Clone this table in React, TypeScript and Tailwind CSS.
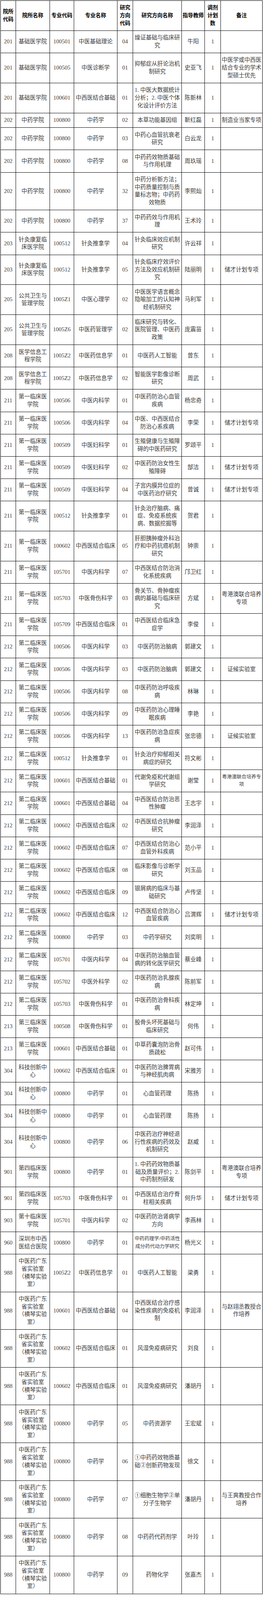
// 调剂名额表：9 列。浏览器窗口实际只有 4096px 高，行高按 4096/6019 压缩，
// 让整张表都落在画面里（原稿每行 29px、每格上下共 26px）
const headers = [
  "院所|代码",
  "院所名称",
  "专业代码",
  "专业名称",
  "研究|方向|代码",
  "研究方向名称",
  "指导教师",
  "调剂|计划|数",
  "备注",
];

const A = "第一临床医|学院";
const B = "第二临床医|学院";
const C = "第三临床医|学院";
const K = "科技创新中|心";
const L = "中医药广东|省实验室|（横琴实验|室）";

// "|" 为换行，"~" 开头为小号字
const rows: string[][] = [
  ["201", "基础医学院", "100501", "中医基础理论", "04", "燥证基础与临床研|究", "牛阳", "1", ""],
  ["201", "基础医学院", "100505", "中医诊断学", "01", "抑郁症从肝论治机|制研究", "史亚飞", "1", "中医学或中西医|结合专业的学术|型硕士优先"],
  ["201", "基础医学院", "100601", "中西医结合基础", "01", "1. 中医大数据统计|分析；2. 中医个体|化设计评价方法", "陈新林", "1", ""],
  ["202", "中药学院", "100800", "中药学", "02", "本草功能基因组", "靳红磊", "1", "制造业当家专项"],
  ["202", "中药学院", "100800", "中药学", "03", "中药心血管抗衰老|研究", "白云龙", "1", ""],
  ["202", "中药学院", "100800", "中药学", "08", "中药药效物质基础|与作用机理", "周玖瑶", "1", ""],
  ["202", "中药学院", "100800", "中药学", "32", "中药分析新方法；|中药质量控制与质|量标志物；中药药|效物质", "李熙灿", "1", ""],
  ["202", "中药学院", "100800", "中药学", "37", "中药药效与作用机|理", "王术玲", "1", ""],
  ["203", "针灸康复临|床医学院", "100512", "针灸推拿学", "04", "针灸临床效应机制|研究", "许云祥", "1", ""],
  ["203", "针灸康复临|床医学院", "100512", "针灸推拿学", "05", "针灸临床疗效评价|方法及效应机制研|究", "陆丽明", "1", "储才计划专项"],
  ["205", "公共卫生与|管理学院", "1005Z1", "中医心理学", "02", "中医医学语言概念|隐喻加工的认知神|经机制研究", "马利军", "1", ""],
  ["205", "公共卫生与|管理学院", "1005Z6", "中医药管理学", "02", "临床研究与转化、|医院管理、中医药|政策", "庞震苗", "1", ""],
  ["208", "医学信息工|程学院", "1005Z2", "中医药信息学", "01", "中医药人工智能", "曾东", "1", ""],
  ["208", "医学信息工|程学院", "1005Z2", "中医药信息学", "02", "智能医学影像诊断|研究", "周武", "1", ""],
  ["211", A, "100506", "中医内科学", "01", "中医药防治心血管|疾病", "杨忠奇", "1", ""],
  ["211", A, "100506", "中医内科学", "04", "中医、中西医结合|防治心系疾病", "李荣", "1", "储才计划专项"],
  ["211", A, "100509", "中医妇科学", "01", "生殖健康与生殖障|碍的中医药研究", "罗颂平", "1", ""],
  ["211", A, "100509", "中医妇科学", "02", "中医药防治女性生|殖障碍", "郜洁", "1", "储才计划专项"],
  ["211", A, "100509", "中医妇科学", "04", "子宫内膜异位症的|中医药治疗研究", "曾诚", "1", "储才计划专项"],
  ["211", A, "100512", "针灸推拿学", "01", "针灸治疗脑病、痛|症、免疫系统疾|病、数据挖掘等", "贺君", "1", ""],
  ["211", A, "100602", "中西医结合临床", "05", "肝胆胰肿瘤外科治|疗和中药抗癌机制|研究", "钟崇", "1", ""],
  ["211", A, "105701", "中医内科学", "07", "中西医结合防治消|化系统疾病", "邝卫红", "1", ""],
  ["211", A, "105703", "中医骨伤科学", "03", "骨关节、骨肿瘤疾|病的基础与临床研|究", "方斌", "1", "粤港澳联合培养|专项"],
  ["211", A, "105709", "中西医结合临床", "01", "中西医结合临床急|症学", "李俊", "1", ""],
  ["212", B, "100506", "中医内科学", "03", "中医药防治脑病", "郭建文", "1", ""],
  ["212", B, "100506", "中医内科学", "03", "中医药防治脑病", "郭建文", "1", "证候实验室"],
  ["212", B, "100506", "中医内科学", "08", "中医药防治呼吸疾|病", "林琳", "1", ""],
  ["212", B, "100506", "中医内科学", "09", "中医药防治心理睡|眠疾病", "李艳", "1", ""],
  ["212", B, "100506", "中医内科学", "13", "中医药防治急症疾|病", "张忠德", "1", "证候实验室"],
  ["212", B, "100512", "针灸推拿学", "01", "针灸治疗抑郁相关|病症的研究", "符文彬", "1", ""],
  ["212", B, "100601", "中西医结合基础", "01", "代谢免疫和代谢组|学研究", "谢莹", "1", "~粤港澳联合培养专|项"],
  ["212", B, "100601", "中西医结合基础", "04", "中西医结合防治恶|性肿瘤", "王志宇", "1", ""],
  ["212", B, "100602", "中西医结合临床", "02", "中西医结合抗肿瘤|研究", "李润泽", "1", ""],
  ["212", B, "100602", "中西医结合临床", "07", "中西医结合防治心|血管外科疾病", "范小平", "1", ""],
  ["212", B, "100602", "中西医结合临床", "08", "临床影像与诊断学|研究", "刘玉品", "1", ""],
  ["212", B, "100602", "中西医结合临床", "09", "银屑病的临床与基|础研究", "卢传坚", "1", ""],
  ["212", B, "100602", "中西医结合临床", "12", "中西医结合防治心|血管疾病", "吕渭辉", "1", "储才计划专项"],
  ["212", B, "100800", "中药学", "03", "中药学研究", "刘奕明", "1", ""],
  ["212", B, "105701", "中医内科学", "04", "中医药防治脑血管|病的转化医学研究", "蔡业峰", "1", ""],
  ["212", B, "105702", "中医外科学", "02", "中医药防治乳腺疾|病", "陈前军", "1", ""],
  ["212", B, "105703", "中医骨伤科学", "01", "中医药防治骨科疾|病", "林定坤", "1", ""],
  ["213", C, "100508", "中医骨伤科学", "01", "股骨头坏死基础与|临床研究", "何伟", "1", ""],
  ["213", C, "100601", "中西医结合基础", "01", "中草药囊泡防治骨|质疏松", "赵可伟", "1", ""],
  ["304", K, "100602", "中西医结合临床", "01", "中医药防治脾胃病|与神经肌肉病", "宋雅芳", "1", ""],
  ["304", K, "100800", "中药学", "01", "心血管药理", "陈扬", "1", ""],
  ["304", K, "100800", "中药学", "01", "心血管药理", "陈扬", "1", ""],
  ["304", K, "100800", "中药学", "06", "中医药治疗神经退|行性疾病的药效及|机制研究", "赵威", "1", ""],
  ["901", "第四临床医|学院", "100800", "中药学", "01", "1. 中药药效物质基|础及质量评价；2.|中药制剂研发", "陈剑平", "1", "粤港澳联合培养|专项"],
  ["901", "第四临床医|学院", "105703", "中医骨伤科学", "01", "中西医结合治疗脊|柱相关疾病", "何升华", "1", "储才计划专项"],
  ["903", "第十临床医|学院", "105701", "中医内科学", "02", "中医药防治肾病学|方向", "李燕林", "1", ""],
  ["960", "深圳市中西|医结合医院", "100800", "中药学", "01", "~中药药理学/中药活性|成分药代动力学研究", "杨光义", "1", ""],
  ["988", L, "1005Z2", "中医药信息学", "01", "中医药人工智能", "梁勇", "1", ""],
  ["988", L, "100601", "中西医结合基础", "04", "中西医结合治疗感|染性疾病的免疫机|制", "李润泽", "1", "与赵翊丞教授合|作培养"],
  ["988", L, "100602", "中西医结合临床", "01", "风湿免疫病研究", "刘良", "1", ""],
  ["988", L, "100602", "中西医结合临床", "01", "风湿免疫病研究", "潘胡丹", "1", ""],
  ["988", L, "100800", "中药学", "05", "中药资源学", "王宏斌", "1", ""],
  ["988", L, "100800", "中药学", "06", "①中药药效物质基|础②创新药物发现", "徐文", "1", ""],
  ["988", L, "100800", "中药学", "07", "①细胞生物学②单|分子生物学", "潘胡丹", "1", "与王爽教授合作|培养"],
  ["988", L, "100800", "中药学", "08", "中药药代药剂学", "叶玲", "1", ""],
  ["988", L, "100800", "中药学", "09", "药物化学", "张嘉杰", "1", ""],
];

// (29n + 26) * 4096/6019
const heights: Record<number, string> = {
  1: "h-[37.43px]",
  2: "h-[57.16px]",
  3: "h-[76.9px]",
  4: "h-[96.63px]",
};

const cols = "grid grid-cols-[39px_87px_62px_111px_40px_125px_59px_41px_107px]";

function Cell({ text, head }: { text: string; head?: boolean }) {
  const small = text.startsWith("~");
  const lines = (small ? text.slice(1) : text).split("|").filter((l) => l !== "");
  return (
    <div
      className={
        "flex flex-col items-center justify-center border-r border-b border-black text-center leading-[19.7px] " +
        (head
          ? "text-[13.5px] font-bold text-black"
          : small
          ? "text-[12.5px] text-[#3a3a3a]"
          : "text-[14.5px] text-[#3a3a3a]")
      }
    >
      {lines.map((l, i) => (
        <span key={i} className="block whitespace-nowrap">
          {l}
        </span>
      ))}
    </div>
  );
}

export default function App() {
  return (
    <div className="bg-white pt-[1px] pl-[1px] font-['Liberation_Serif','Noto_Sans_CJK_SC',serif]">
      <div className="w-[672px] border-t border-l border-black">
        <div className={`${cols} h-[76.9px]`}>
          {headers.map((h, i) => (
            <Cell key={i} text={h} head />
          ))}
        </div>
        {rows.map((row, r) => {
          const n = Math.max(...row.map((c) => c.split("|").length));
          return (
            <div key={r} className={`${cols} ${heights[n]}`}>
              {row.map((c, i) => (
                <Cell key={i} text={c} />
              ))}
            </div>
          );
        })}
      </div>
    </div>
  );
}
